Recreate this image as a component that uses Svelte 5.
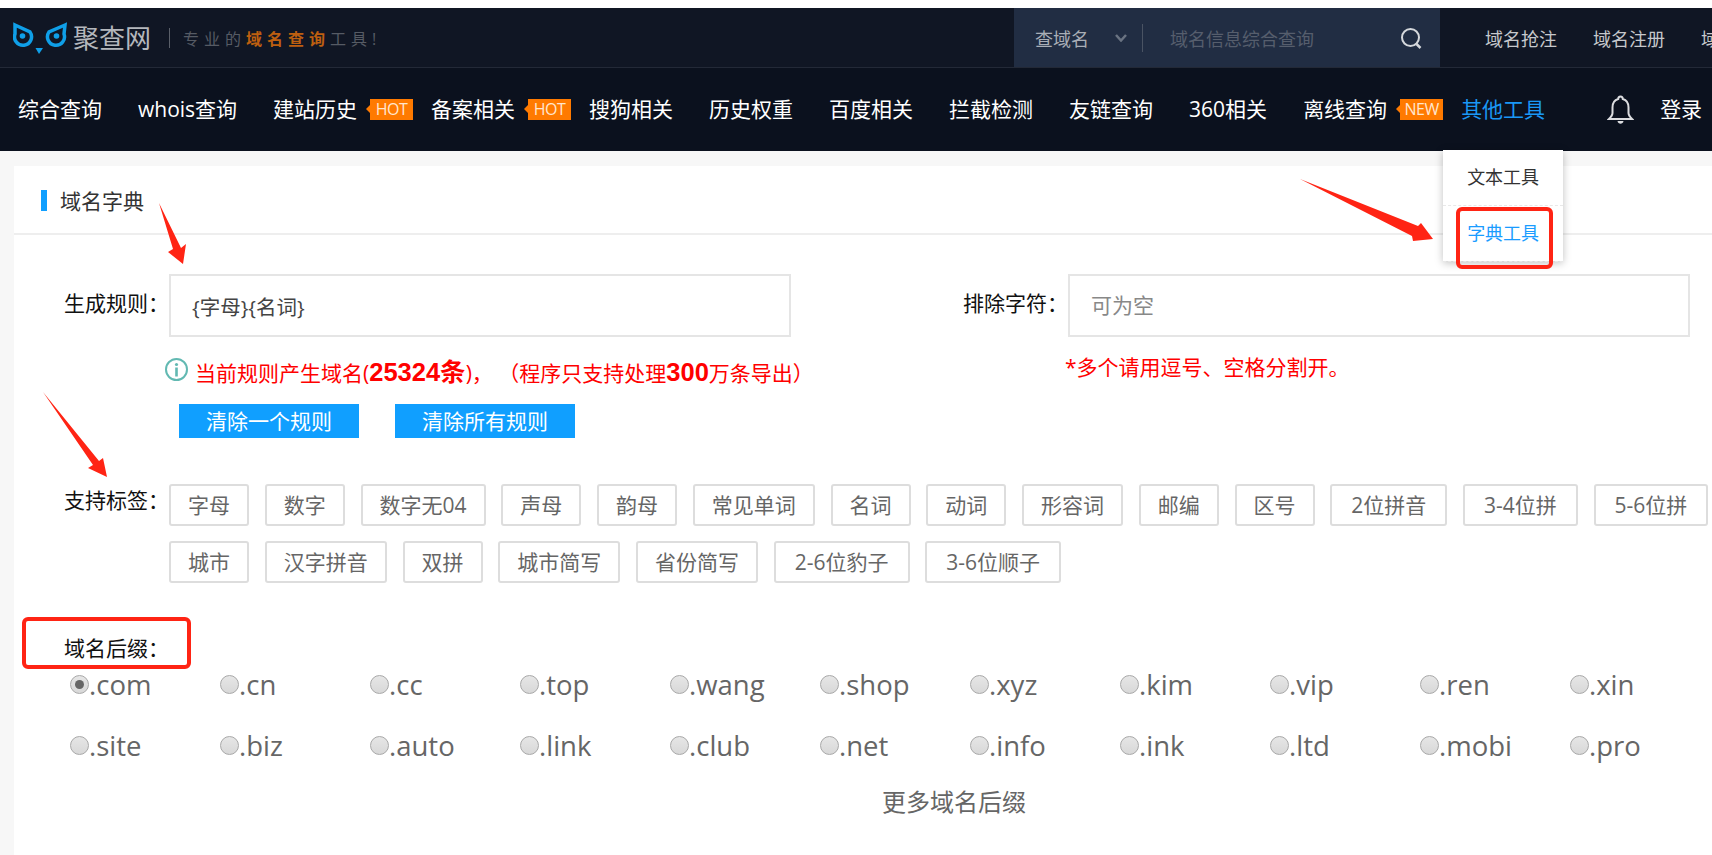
<script>
  const navItems = [
    { label: '综合查询' },
    { label: 'whois查询' },
    { label: '建站历史', badge: 'HOT' },
    { label: '备案相关', badge: 'HOT' },
    { label: '搜狗相关' },
    { label: '历史权重' },
    { label: '百度相关' },
    { label: '拦截检测' },
    { label: '友链查询' },
    { label: '360相关' },
    { label: '离线查询', badge: 'NEW' }
  ];

  const tags = [
    '字母', '数字', '数字无04', '声母', '韵母', '常见单词', '名词', '动词', '形容词', '邮编', '区号',
    '2位拼音', '3-4位拼', '5-6位拼', '城市', '汉字拼音', '双拼', '城市简写', '省份简写', '2-6位豹子', '3-6位顺子'
  ];

  const suffixes = [
    '.com', '.cn', '.cc', '.top', '.wang', '.shop', '.xyz', '.kim', '.vip', '.ren', '.xin',
    '.site', '.biz', '.auto', '.link', '.club', '.net', '.info', '.ink', '.ltd', '.mobi', '.pro'
  ];
</script>

<header class="header">
  <div class="topbar">
    <div class="logo">
      <svg class="owl" width="54" height="34" viewBox="0 0 54 34">
        <g fill="none" stroke="#0f9fe8" stroke-width="3.500">
          <path d="M2 3 L17 10 A8.5 8.5 0 1 1 2 12 Z" />
          <path d="M52 3 L36 10 A8.5 8.5 0 1 0 51 12 Z" />
        </g>
        <circle cx="9.5" cy="14" r="2.8" fill="#0f9fe8" />
        <circle cx="43.5" cy="14" r="2.8" fill="#0f9fe8" />
        <path d="M22.500 26 L30 26 L26 32 Z" fill="#0f9fe8" />
      </svg>
      <span class="brand">聚查网</span>
      <i class="logo-sep"></i>
      <span class="slogan">专业的<b>域名查询</b>工具!</span>
    </div>

    <div class="search">
      <span class="search-type">查域名</span>
      <svg class="chevron" width="12" height="8" viewBox="0 0 12 8">
        <path d="M1 1 L6 6.500 L11 1" fill="none" stroke="#6a7382" stroke-width="2.500" />
      </svg>
      <i class="search-sep"></i>
      <span class="search-hint">域名信息综合查询</span>
      <svg class="search-icon" width="23" height="23" viewBox="0 0 23 23">
        <circle cx="10.500" cy="10.500" r="8.500" fill="none" stroke="#d5d8dc" stroke-width="2" />
        <path d="M16.500 17 L20.500 21" stroke="#d5d8dc" stroke-width="2.500" />
      </svg>
    </div>

    <nav class="toplinks">
      <span>域名抢注</span>
      <span>域名注册</span>
      <span>域名交易</span>
    </nav>
  </div>

  <nav class="mainnav">
    {#each navItems as item}
      <div class="nav-item" class:has-badge={item.badge}>
        {item.label}
        {#if item.badge}
          <span class="badge">{item.badge}</span>
        {/if}
      </div>
    {/each}

    <div class="nav-item active">
      其他工具
      <div class="dropdown">
        <div class="drop-row">文本工具</div>
        <div class="drop-row current">字典工具</div>
      </div>
    </div>

    <svg class="bell" width="27" height="30" viewBox="0 0 27 30">
      <path
        d="M13.500 1.500 C15 1.500 15.800 2.500 15.800 4 C20 5.200 21.500 8.500 21.500 12.500 L21.500 18 C21.500 20.500 23.500 22.500 25 24 L2 24 C3.500 22.500 5.500 20.500 5.500 18 L5.500 12.500 C5.500 8.500 7 5.200 11.200 4 C11.200 2.500 12 1.500 13.500 1.500 Z"
        fill="none"
        stroke="#dcdde0"
        stroke-width="2"
      />
      <path d="M10.500 26 C11 29.500 16 29.500 16.500 26 Z" fill="#dcdde0" />
    </svg>
    <span class="login">登录</span>
  </nav>
</header>

<main class="page">
  <section class="panel">
    <div class="panel-title"><i></i>域名字典</div>

    <div class="rules">
      <div class="rule-col">
        <div class="field">
          <span class="label">生成规则：</span>
          <div class="input">{'{字母}{名词}'}</div>
        </div>
        <div class="count">
          <svg width="25" height="25" viewBox="0 0 25 25">
            <circle cx="12.500" cy="12.500" r="10.500" fill="none" stroke="#62b9b2" stroke-width="2" />
            <circle cx="12.500" cy="7.500" r="1.600" fill="#62b9b2" />
            <rect x="11.200" y="10.500" width="2.600" height="9" fill="#62b9b2" />
          </svg>
          <span>当前规则产生域名(<b>25324条</b>)， （程序只支持处理<b>300</b>万条导出）</span>
        </div>
        <div class="actions">
          <button>清除一个规则</button>
          <button>清除所有规则</button>
        </div>
      </div>

      <div class="rule-col second">
        <div class="field">
          <span class="label">排除字符：</span>
          <div class="input placeholder">可为空</div>
        </div>
        <p class="note">*多个请用逗号、空格分割开。</p>
      </div>
    </div>

    <div class="tag-row">
      <span class="label">支持标签：</span>
      <div class="tags">
        {#each tags as tag}
          <span class="tag" class:wide={tag.includes('位')}>{tag}</span>
        {/each}
      </div>
    </div>

    <div class="suffix-label">域名后缀：</div>
    <div class="suffixes">
      {#each suffixes as suffix, i}
        <div class="suffix">
          <i class="radio" class:checked={i === 0}></i>{suffix}
        </div>
      {/each}
    </div>
    <div class="more">更多域名后缀</div>
  </section>
</main>

<!-- red marks drawn on top of the screenshot -->
<svg class="marks" width="1712" height="855" viewBox="0 0 1712 855">
  <g fill="#ff2414">
    <path d="M1300 179 L1418 226 L1421 223 L1433 239 L1413 241 L1412 236 Z" />
    <path d="M159 203 L181 248 L186 244 L183 264 L168 252 L173 249 Z" />
    <path d="M43 392 L99 461 L103 458 L107 477 L88 468 L93 465 Z" />
  </g>
  <g fill="none" stroke="#ff2414" stroke-width="4">
    <rect x="1458" y="209" width="93" height="58" rx="4" />
    <rect x="24" y="619" width="165" height="48" rx="4" />
  </g>
</svg>

<style>
  :global(html),
  :global(body) {
    margin: 0;
    height: 100%;
    overflow: hidden;
    background: #f7f7f7;
  }

  :global(#app) {
    font-family: "Open Sans", "Noto Sans CJK SC", sans-serif;
    position: relative;
    width: 1712px;
    height: 855px;
    overflow: hidden;
  }

  .header {
    border-top: 8px solid #fff;
  }

  .topbar {
    display: flex;
    height: 59px;
    background: #101624;
    border-bottom: 1px solid #232937;
  }

  .logo {
    display: flex;
    flex: none;
    align-items: center;
    width: 1014px;
    padding-left: 13px;
    box-sizing: border-box;
  }

  .owl {
    margin-top: 2px;
  }

  .brand {
    margin-left: 6px;
    font-size: 26px;
    line-height: 30px;
    color: #b4b7bc;
  }

  .logo-sep {
    width: 1px;
    height: 20px;
    margin: 0 13px 0 18px;
    background: #5a5f69;
  }

  .slogan {
    font-size: 16px;
    letter-spacing: 5px;
    color: #565b64;
  }

  .slogan b {
    color: #bd5f10;
  }

  .search {
    display: flex;
    flex: none;
    align-items: center;
    width: 426px;
    background: #212d43;
  }

  .search-type {
    flex: none;
    margin-left: 21px;
    font-size: 18px;
    color: #a9aeb6;
  }

  .chevron {
    flex: none;
    margin-left: 26px;
  }

  .search-sep {
    flex: none;
    width: 1px;
    height: 28px;
    margin: 0 27px 0 15px;
    background: #4a5363;
  }

  .search-hint {
    flex: none;
    font-size: 18px;
    color: #565e6d;
  }

  .search-icon {
    flex: none;
    margin-left: 86px;
    margin-top: 2px;
  }

  .toplinks {
    display: flex;
    flex: none;
    gap: 36px;
    padding-left: 45px;
    align-items: center;
    font-size: 18px;
    color: #c6c8cc;
    white-space: nowrap;
  }

  .mainnav {
    display: flex;
    align-items: center;
    height: 83px;
    background: #0b111e;
    color: #fff;
    font-size: 21px;
    white-space: nowrap;
  }

  .nav-item {
    position: relative;
    display: flex;
    align-items: center;
    box-sizing: border-box;
    height: 100%;
    padding: 0 18px 4px;
  }

  .nav-item.has-badge {
    padding-right: 0;
  }

  .nav-item.active {
    color: #1a97f5;
  }

  .badge {
    position: relative;
    box-sizing: border-box;
    width: 43px;
    margin: 4px 0 0 13px;
    height: 21px;
    line-height: 21px;
    text-align: center;
    background: #ff7a00;
    color: #ffe6cf;
    font-size: 16px;
    letter-spacing: -0.500px;
  }

  .badge::before {
    content: '';
    position: absolute;
    left: -4px;
    top: 6px;
    border: 4px solid transparent;
    border-left: 0;
    border-right-color: #ff7a00;
  }

  .dropdown {
    position: absolute;
    left: 0;
    top: 82px;
    width: 120px;
    height: 111px;
    background: #fff;
    box-shadow: 0 2px 8px rgba(0, 0, 0, 0.25);
    z-index: 2;
    color: #333;
    font-size: 18px;
    text-align: center;
  }

  .drop-row {
    height: 55px;
    line-height: 54px;
    border-bottom: 1px dashed #e8e8e8;
  }

  .drop-row.current {
    color: #1a9cff;
  }

  .bell {
    margin-left: 44px;
  }

  .login {
    margin: 0 0 4px 26px;
  }

  .page {
    padding: 15px 0 0 14px;
  }

  .panel {
    background: #fff;
    height: 689px;
    color: #111;
  }

  .panel-title {
    display: flex;
    align-items: center;
    box-sizing: border-box;
    height: 69px;
    border-bottom: 2px solid #eee;
    padding: 1px 0 0 27px;
    font-size: 21px;
    color: #333;
  }

  .panel-title i {
    width: 6px;
    height: 21px;
    margin: 0 13px 0 0;
    background: #109fff;
  }

  .rules {
    display: flex;
    padding-top: 39px;
  }

  .rule-col {
    flex: none;
    width: 899px;
  }

  .rule-col.second {
    width: auto;
  }

  .field {
    display: flex;
  }

  .label {
    flex: none;
    width: 105px;
    margin-left: 50px;
    font-size: 21px;
    line-height: 58px;
    white-space: nowrap;
  }

  .input {
    box-sizing: border-box;
    width: 622px;
    height: 63px;
    padding-left: 21px;
    border: 2px solid #e5e5e5;
    font-size: 20.500px;
    line-height: 62px;
    color: #444;
  }

  .input.placeholder {
    color: #888;
    font-size: 21px;
    line-height: 59px;
  }

  .count {
    display: flex;
    align-items: center;
    margin: 20px 0 0 150px;
    height: 25px;
    font-size: 21px;
    color: #f00;
    white-space: nowrap;
  }

  .count span {
    margin-left: 6px;
  }

  .count b {
    font-size: 25.500px;
    font-family: "Liberation Sans", "Noto Sans CJK SC", sans-serif;
  }

  .actions {
    display: flex;
    gap: 36px;
    margin: 22px 0 0 165px;
  }

  .actions button {
    width: 180px;
    height: 34px;
    padding: 0;
    border: 0;
    background: #109fff;
    color: #fff;
    font: inherit;
    font-size: 21px;
    line-height: 32px;
  }

  .note {
    margin: 14px 0 0 152px;
    font-size: 21px;
    line-height: 32px;
    color: #f00;
    white-space: nowrap;
  }

  .tag-row {
    display: flex;
    margin-top: 46px;
  }

  .tag-row .label {
    line-height: 32px;
  }

  .tags {
    display: flex;
    flex-wrap: wrap;
    gap: 15px 15.750px;
    width: 1540px;
  }

  .tag {
    box-sizing: border-box;
    height: 42px;
    padding: 0 17px;
    border: 2px solid #ddd;
    border-radius: 3px;
    font-size: 21px;
    line-height: 38px;
    color: #666;
    white-space: nowrap;
  }

  .tag.wide {
    padding: 0 19px;
  }

  .suffix-label {
    margin: 54px 0 0 50px;
    font-size: 21px;
    line-height: 22px;
  }

  .suffixes {
    display: grid;
    grid-template-columns: repeat(11, 150px);
    grid-auto-rows: 61px;
    margin: -5px 0 0 56px;
  }

  .suffix {
    display: flex;
    align-items: center;
    font-size: 27.500px;
    color: #666;
  }

  .radio {
    box-sizing: border-box;
    width: 19px;
    height: 19px;
    border: 1px solid #a8a8a8;
    border-radius: 50%;
    background: linear-gradient(#e6e6e6, #d8d8d8);
    position: relative;
  }

  .radio.checked::after {
    content: '';
    position: absolute;
    left: 4px;
    top: 4px;
    width: 9px;
    height: 9px;
    border-radius: 50%;
    background: #666;
  }

  .more {
    margin: 10px 0 0 868px;
    font-size: 24px;
    line-height: 32px;
    color: #666;
  }

  .marks {
    position: absolute;
    left: 0;
    top: 0;
    z-index: 5;
    pointer-events: none;
  }
</style>
